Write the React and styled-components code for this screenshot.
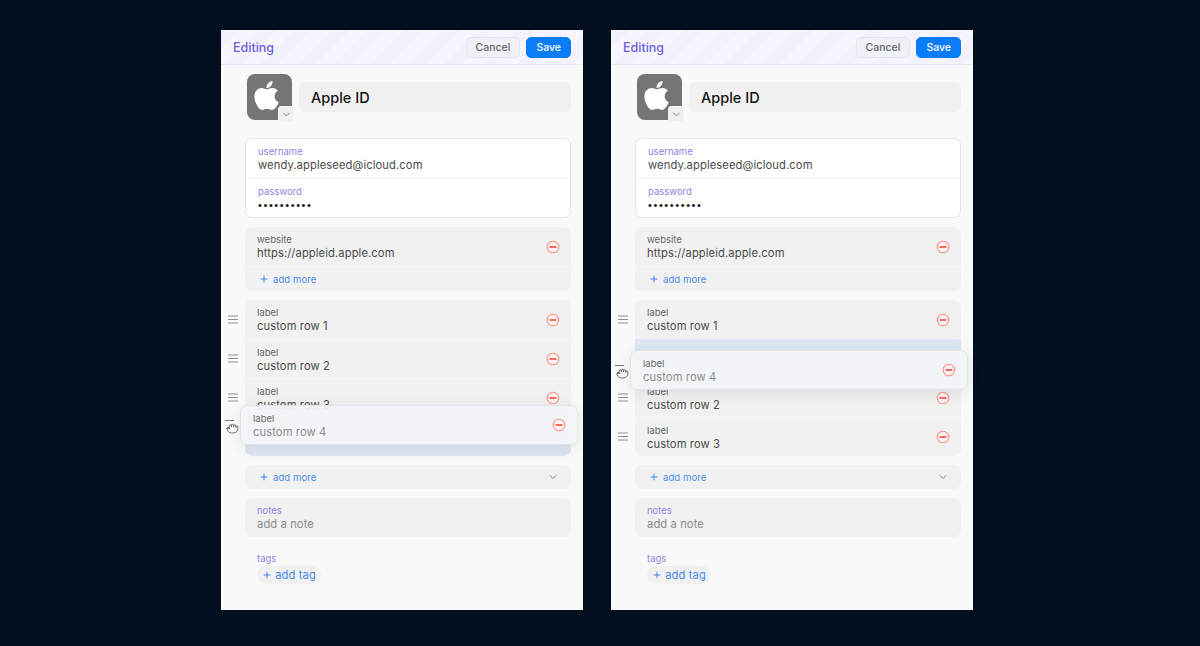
import React from "react";
import styled, { createGlobalStyle } from "styled-components";
import { FaApple } from "react-icons/fa";
import { ChevronDown, Plus, Grab } from "lucide-react";

const Global = createGlobalStyle`
  html, body { margin: 0; padding: 0; height: 100%; background: #010f1f; }
  * { box-sizing: border-box; }
  body { font-family: Inter, "Liberation Sans", sans-serif; -webkit-font-smoothing: antialiased; }
`;

const Page = styled.div`
  display: flex;
  gap: 28px;
  height: 646px;
  padding: 30px 0 0 221px;
  overflow: hidden;
`;
const Panel = styled.div`
  width: 362px;
  height: 580px;
  background: #f9f9f9;
  display: flex;
  flex-direction: column;
`;
const Header = styled.header`
  height: 35px;
  flex: none;
  display: flex;
  align-items: center;
  gap: 6px;
  padding: 0 12px;
  border-bottom: 1px solid #e9e7f3;
  background: repeating-linear-gradient(135deg, #f4f1fe 0 13px, #f7f5fe 13px 26px);
`;
const Title = styled.div`
  flex: 1;
  font-size: 12.5px;
  font-weight: 500;
  color: #6a5fe0;
`;
const HeaderButton = styled.button`
  height: 21px;
  padding: 0 ${(p) => (p.$primary ? "9px" : "9px")};
  border-radius: 5px;
  font: 500 10.5px Inter, sans-serif;
  border: 1px solid ${(p) => (p.$primary ? "#0a7cf7" : "#e2e5ee")};
  background: ${(p) => (p.$primary ? "#0a7cf7" : "#eff1f6")};
  color: ${(p) => (p.$primary ? "#fff" : "#666")};
`;
const Body = styled.div`
  flex: 1;
  display: flex;
  flex-direction: column;
  gap: 9px;
  padding: 9px 12px 0 0;
`;
const Identity = styled.div`
  display: flex;
  align-items: center;
  gap: 7px;
  margin: 0 0 9px 26px;
`;
const IconTile = styled.div`
  position: relative;
  width: 45px;
  height: 46px;
  flex: none;
  border-radius: 8px;
  background: #757575;
  display: flex;
  align-items: center;
  justify-content: center;
  padding: 0 6px 3px 0;
  color: #fff;
`;
const IconMenu = styled.span`
  position: absolute;
  right: -2px;
  bottom: -2px;
  width: 16px;
  height: 16px;
  border-radius: 3px;
  background: #f0f0f0;
  border: 1px solid #f6f6f6;
  display: flex;
  align-items: center;
  justify-content: center;
  color: #666;
`;
const NameField = styled.div`
  flex: 1;
  height: 30px;
  border-radius: 6px;
  background: #f1f1f1;
  padding: 0 12px;
  display: flex;
  align-items: center;
  font-size: 14.5px;
  font-weight: 500;
  color: #111;
`;
const Card = styled.section`
  margin-left: 24px;
  border-radius: 7px;
  overflow: hidden;
  background: ${(p) => (p.$white ? "#fff" : "#f1f1f1")};
  border: ${(p) => (p.$white ? "1px solid #e7e7e7" : "none")};
`;
const Row = styled.div`
  height: ${(p) => p.$h || 39}px;
  display: flex;
  align-items: center;
  justify-content: space-between;
  padding: 0 11px 0 12px;
  & + & { border-top: 1px solid ${(p) => (p.$white ? "#e7e7e7" : "#f6f6f6")}; }
`;
const FieldText = styled.div`
  display: flex;
  flex-direction: column;
`;
const Label = styled.span`
  font-size: 9.5px;
  line-height: 13px;
  color: ${(p) => (p.$accent ? "#8d85e4" : "#666")};
`;
const Value = styled.span`
  font-size: 11.2px;
  line-height: 14px;
  letter-spacing: 0.1px;
  color: ${(p) => (p.$muted ? "#8c8c8c" : "#4a4a4a")};
`;
const Dots = styled.span`
  font-size: 11px;
  line-height: 14px;
  letter-spacing: 1.6px;
  color: #111;
  font-family: "Liberation Sans", sans-serif;
`;
const AddMore = styled.span`
  display: inline-flex;
  align-items: center;
  gap: 4px;
  font-size: 9.5px;
  letter-spacing: 0.1px;
  color: #4b8be8;
  margin-left: 2px;
  svg { color: #1f74ea; }
`;
const List = styled.div`
  position: relative;
  display: grid;
  grid-template-columns: 24px 1fr;
`;
const Handle = styled.span`
  display: flex;
  align-items: center;
  justify-content: center;
  color: #8f8f8f;
`;
const ListRow = styled(Row)`
  background: #f1f1f1;
  border-top: ${(p) => (p.$first ? "none" : "1px solid #f6f6f6")};
  border-radius: ${(p) => (p.$first ? "7px 7px 0 0" : p.$last ? "0 0 7px 7px" : "0")};
`;
const Placeholder = styled.div`
  height: 39px;
  background: #dde6f1;
  border-radius: ${(p) => (p.$last ? "0 0 7px 7px" : "0")};
`;
const Ghost = styled.div`
  position: absolute;
  left: 19px;
  top: ${(p) => p.$top}px;
  width: 338px;
  height: 40px;
  padding: 0 11px 0 12px;
  display: flex;
  align-items: center;
  justify-content: space-between;
  background: rgba(243, 244, 247, 0.93);
  border: 1px solid #e2e4e8;
  border-radius: 7px;
  box-shadow: 0 3px 14px rgba(40, 50, 70, 0.1);
`;
const GhostHandle = styled.span`
  position: absolute;
  left: -16px;
  top: 14px;
  width: 13px;
  color: #555;
  display: flex;
  flex-direction: column;
  align-items: flex-start;
`;
const HandleLine = styled.i`
  display: block;
  width: 9px;
  height: 1px;
  margin-bottom: 2px;
  background: #777;
`;
const TagsBlock = styled.section`
  margin: 6px 0 0 36px;
  display: flex;
  flex-direction: column;
  gap: 1px;
`;
const Chip = styled.span`
  align-self: flex-start;
  height: 18px;
  width: 64px;
  border-radius: 9px;
  background: #f1f1f1;
  display: flex;
  align-items: center;
  justify-content: center;
  gap: 3px;
  font-size: 11.2px;
  letter-spacing: 0.1px;
  color: #4b8be8;
  svg { color: #1f74ea; }
`;

const Minus = ({ faded }) => (
  <svg width="14" height="14" viewBox="0 0 14 14" aria-hidden="true" style={{ flex: "none", opacity: faded ? 0.9 : 1 }}>
    <circle cx="7" cy="7" r="5.8" fill="#fdf3f2" stroke="#fb9184" strokeWidth="1.1" />
    <path d="M4 7h6" stroke="#f4402f" strokeWidth="1.3" strokeLinecap="round" />
  </svg>
);
const Bars = () => (
  <svg width="10" height="9" viewBox="0 0 10 9" aria-hidden="true">
    <path d="M0 1h10M0 4.5h10M0 8h10" stroke="currentColor" strokeWidth="1" />
  </svg>
);

const CustomRow = ({ n, first, last }) => (
  <>
    <Handle><Bars /></Handle>
    <ListRow $first={first} $last={last}>
      <FieldText>
        <Label>label</Label>
        <Value>custom row {n}</Value>
      </FieldText>
      <Minus />
    </ListRow>
  </>
);

const Editor = ({ order, ghostTop }) => (
  <Panel>
    <Header>
      <Title>Editing</Title>
      <HeaderButton>Cancel</HeaderButton>
      <HeaderButton $primary>Save</HeaderButton>
    </Header>
    <Body>
      <Identity>
        <IconTile>
          <FaApple size={33} />
          <IconMenu><ChevronDown size={11} strokeWidth={1.6} /></IconMenu>
        </IconTile>
        <NameField>Apple ID</NameField>
      </Identity>
      <Card $white>
        <Row $white $h={39}>
          <FieldText>
            <Label $accent>username</Label>
            <Value>wendy.appleseed@icloud.com</Value>
          </FieldText>
        </Row>
        <Row $white $h={39}>
          <FieldText>
            <Label $accent>password</Label>
            <Dots>••••••••••</Dots>
          </FieldText>
        </Row>
      </Card>
      <Card>
        <Row>
          <FieldText>
            <Label>website</Label>
            <Value>https://appleid.apple.com</Value>
          </FieldText>
          <Minus />
        </Row>
        <Row $h={25}>
          <AddMore><Plus size={10} strokeWidth={2} />add more</AddMore>
        </Row>
      </Card>
      <List>
        {order.map((n, i) =>
          n === 4 ? (
            <React.Fragment key="slot">
              <span />
              <Placeholder $last={i === order.length - 1} />
            </React.Fragment>
          ) : (
            <CustomRow key={n} n={n} first={i === 0} last={i === order.length - 1} />
          )
        )}
        <Ghost $top={ghostTop}>
          <GhostHandle>
            <HandleLine />
            <Grab size={13} strokeWidth={1.5} style={{ marginTop: -2, marginLeft: 1 }} />
          </GhostHandle>
          <FieldText>
            <Label>label</Label>
            <Value $muted>custom row 4</Value>
          </FieldText>
          <Minus />
        </Ghost>
      </List>
      <Card>
        <Row $h={24}>
          <AddMore><Plus size={10} strokeWidth={2} />add more</AddMore>
          <ChevronDown size={12} strokeWidth={1.6} color="#666" style={{ marginRight: 1 }} />
        </Row>
      </Card>
      <Card>
        <Row>
          <FieldText>
            <Label $accent>notes</Label>
            <Value $muted>add a note</Value>
          </FieldText>
        </Row>
      </Card>
      <TagsBlock>
        <Label $accent>tags</Label>
        <Chip><Plus size={10} strokeWidth={2} />add tag</Chip>
      </TagsBlock>
    </Body>
  </Panel>
);

export default function App() {
  return (
    <Page>
      <Global />
      <Editor order={[1, 2, 3, 4]} ghostTop={105} />
      <Editor order={[1, 4, 2, 3]} ghostTop={50} />
    </Page>
  );
}
